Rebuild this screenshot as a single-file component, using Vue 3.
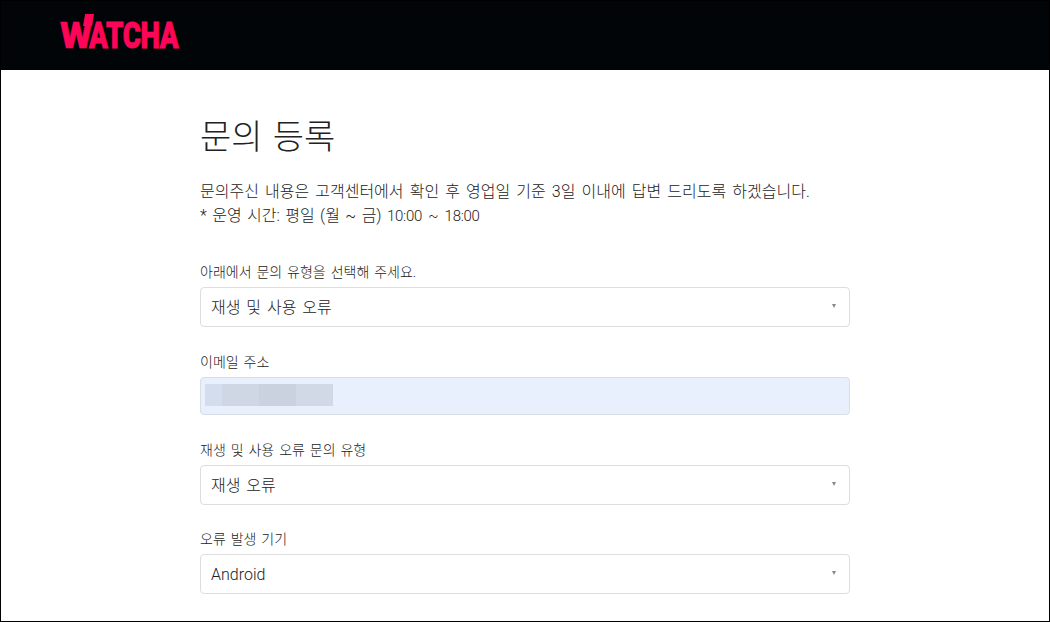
<template>
  <div class="page">
    <header class="top">
      <a class="logo">
        <span class="logo-w">W</span><span class="logo-rest">ATCHA</span>
        <i class="logo-peak"></i>
      </a>
    </header>
    <main class="content">
      <h1>문의 등록</h1>
      <p class="desc">문의주신 내용은 고객센터에서 확인 후 영업일 기준 3일 이내에 답변 드리도록 하겠습니다.</p>
      <p class="desc hours">* 운영 시간: 평일 (월 ~ 금) <span class="num">10:00 ~ 18:00</span></p>

      <div class="field first">
        <label>아래에서 문의 유형을 선택해 주세요.</label>
        <div class="select">재생 및 사용 오류<i class="caret"></i></div>
      </div>

      <div class="field">
        <label>이메일 주소</label>
        <div class="email">
          <div class="blur">
            <span v-for="c in blurCols" :key="c.color" :style="{ width: c.width + 'px', background: c.color }"></span>
          </div>
        </div>
      </div>

      <div class="field">
        <label>재생 및 사용 오류 문의 유형</label>
        <div class="select">재생 오류<i class="caret"></i></div>
      </div>

      <div class="field">
        <label>오류 발생 기기</label>
        <div class="select">Android<i class="caret"></i></div>
      </div>
    </main>
  </div>
</template>

<script setup>
// 이메일 주소 모자이크 블록
const blurCols = [
  { width: 17, color: '#d3dded' },
  { width: 37, color: '#cfd6e4' },
  { width: 37, color: '#cbd2df' },
  { width: 37, color: '#d1d8e6' }
]
</script>

<style>
html, body {
  margin: 0;
  background: #fff;
}
</style>

<style scoped>
.page {
  box-sizing: border-box;
  width: 1050px;
  height: 622px;
  border: 1px solid #000;
  overflow: hidden;
  font-family: Roboto, "Noto Sans CJK KR", sans-serif;
  font-weight: 300;
  color: #222;
}
.top {
  height: 69px;
  background: #020508;
  display: flex;
  align-items: center;
  padding-left: 59px;
}
.logo {
  position: relative;
  display: flex;
  width: 120px;
  height: 40px;
  padding-top: 6px;
  box-sizing: border-box;
  font-family: Roboto, sans-serif;
  font-weight: 900;
  font-size: 37px;
  line-height: 28px;
  color: #ff0558;
  white-space: nowrap;
}
.logo-w {
  -webkit-text-stroke: 0.4px #ff0558;
}
.logo-rest {
  margin-left: -3px;
  letter-spacing: -0.5px;
  -webkit-text-stroke: 0.8px #ff0558;
  transform: scaleX(0.75);
  transform-origin: left top;
}
.logo-peak {
  position: absolute;
  left: 23px;
  top: -1.5px;
  width: 11px;
  height: 12px;
  background: #ff0558;
  clip-path: polygon(20% 0, 100% 0, 82% 100%, 0 100%);
}
.content {
  width: 650px;
  margin-left: 199px;
}
h1 {
  margin: 0;
  padding-top: 44px;
  font-size: 34px;
  font-weight: 300;
  line-height: 46px;
  word-spacing: 2px;
  color: #222;
}
.desc {
  margin: 20px 0 0;
  font-size: 16px;
  line-height: 24px;
  word-spacing: 2.2px;
}
.hours {
  margin: 0;
  word-spacing: 1.5px;
}
.num {
  font-size: 15px;
  letter-spacing: -0.3px;
  word-spacing: 3px;
}
.field {
  margin-top: 24.5px;
}
.field.first {
  margin-top: 34px;
}
label {
  display: block;
  font-size: 14px;
  line-height: 20px;
  margin-bottom: 5px;
  word-spacing: 1.5px;
}
.select {
  position: relative;
  box-sizing: border-box;
  height: 40px;
  padding: 0 10px;
  border: 1px solid #ddd;
  border-radius: 4px;
  background: #fff;
  font-size: 16px;
  line-height: 40px;
  word-spacing: 2px;
}
.caret {
  position: absolute;
  right: 13px;
  top: 16px;
  width: 0;
  height: 0;
  border-left: 2.5px solid transparent;
  border-right: 2.5px solid transparent;
  border-top: 4px solid #888;
}
.email {
  box-sizing: border-box;
  height: 38.5px;
  padding: 6px 4px;
  border: 1px solid #d9dde6;
  border-radius: 4px;
  background: #e8f0fe;
}
.blur {
  display: flex;
  height: 22px;
}
</style>
